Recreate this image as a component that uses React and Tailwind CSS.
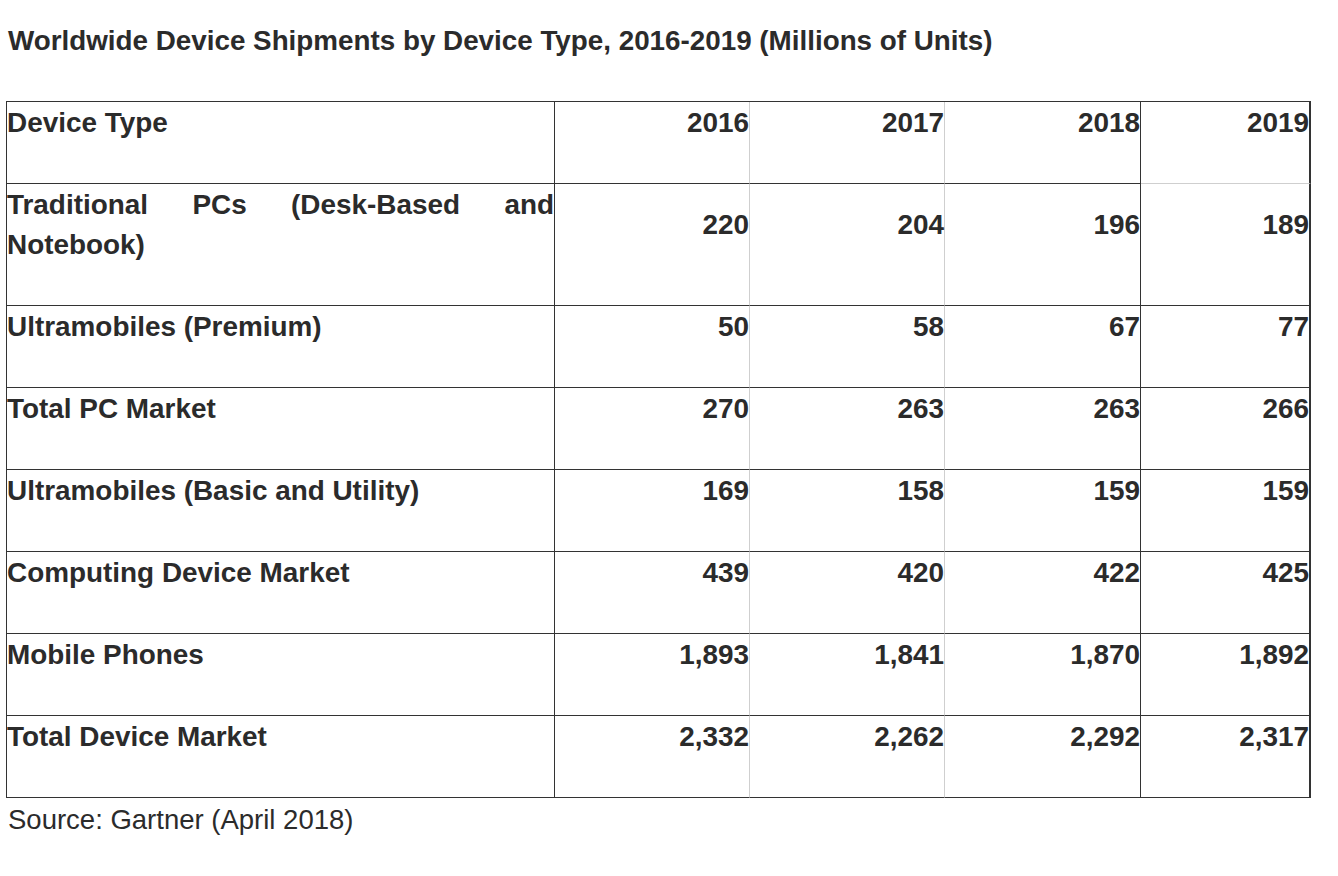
import React from "react";

const rows = [
  { label: "Traditional PCs (Desk-Based and Notebook)", v: ["220", "204", "196", "189"], justify: true },
  { label: "Ultramobiles (Premium)", v: ["50", "58", "67", "77"] },
  { label: "Total PC Market", v: ["270", "263", "263", "266"] },
  { label: "Ultramobiles (Basic and Utility)", v: ["169", "158", "159", "159"] },
  { label: "Computing Device Market", v: ["439", "420", "422", "425"] },
  { label: "Mobile Phones", v: ["1,893", "1,841", "1,870", "1,892"] },
  { label: "Total Device Market", v: ["2,332", "2,262", "2,292", "2,317"] },
];

const numBorders = [
  "border-r-[#cfcfcf]",
  "border-r-[#cfcfcf]",
  "border-r-[#333]",
  "border-r-[#333] border-r-2",
];

export default function App() {
  return (
    <div
      className="min-h-[876px] bg-white pl-[6px] pt-[27px] text-[#2b2b2b]"
      style={{ fontFamily: '"Liberation Sans", Arial, Helvetica, sans-serif' }}
    >
      <h1 className="text-[27.8px] font-bold leading-[28px] pl-[2px]">
        Worldwide Device Shipments by Device Type, 2016-2019 (Millions of Units)
      </h1>
      <table className="mt-[46px] w-[1304px] table-fixed border-separate border-spacing-0 border-t border-l border-[#333] text-[27.9px] font-bold leading-[40px]">
        <colgroup>
          <col className="w-[548px]" />
          <col className="w-[195px]" />
          <col className="w-[195px]" />
          <col className="w-[196px]" />
          <col className="w-[170px]" />
        </colgroup>
        <thead>
          <tr>
            <th className="border-r border-b border-[#333] pt-px pb-[40px] text-left align-middle font-bold">
              Device Type
            </th>
            {["2016", "2017", "2018", "2019"].map((y, i) => (
              <th
                key={y}
                className={`border-r border-b border-[#333] pt-px pb-[40px] text-right align-middle font-bold ${numBorders[i]} ${i === 3 ? "border-b-[#cfcfcf]" : ""}`}
              >
                {y}
              </th>
            ))}
          </tr>
        </thead>
        <tbody>
          {rows.map((r) => (
            <tr key={r.label}>
              <td
                className={`border-r border-b border-[#333] pt-px pb-[40px] align-middle ${r.justify ? "text-justify" : "text-left"}`}
              >
                {r.label}
              </td>
              {r.v.map((v, i) => (
                <td
                  key={i}
                  className={`border-r border-b border-[#333] pt-px pb-[40px] text-right align-middle ${numBorders[i]}`}
                >
                  {v}
                </td>
              ))}
            </tr>
          ))}
        </tbody>
      </table>
      <p className="mt-[6px] pl-[2px] text-[27.5px] leading-[32px] font-normal">
        Source: Gartner (April 2018)
      </p>
    </div>
  );
}
